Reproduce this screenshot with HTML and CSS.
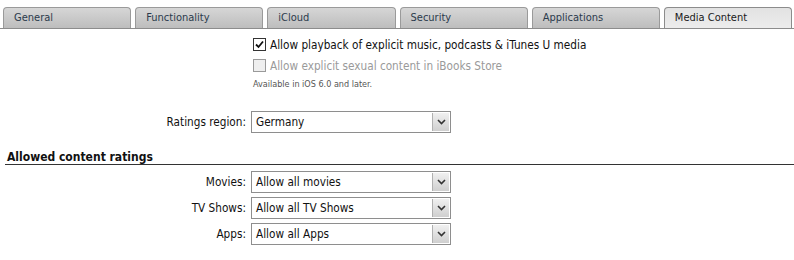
FILE: index.html
```html
<!DOCTYPE html>
<html lang="en">
<head>
    <meta charset="UTF-8">
    <title>Restrictions - Media Content</title>
    <link rel="stylesheet" href="styles.css">
</head>
<body>

    <!-- Tab strip -->
    <div class="tabs">
        <div class="tab">General</div>
        <div class="tab">Functionality</div>
        <div class="tab">iCloud</div>
        <div class="tab">Security</div>
        <div class="tab">Applications</div>
        <div class="tab active">Media Content</div>
    </div>

    <div class="panel">
        <div class="checks">
            <div class="check">
                <span class="box checked">
                    <svg width="11" height="11" viewBox="0 0 11 11"><path d="M2 5.5 L4.5 8 L9 2.5" fill="none" stroke="#111" stroke-width="1.8"/></svg>
                </span>
                <span>Allow playback of explicit music, podcasts &amp; iTunes U media</span>
            </div>
            <div class="check disabled">
                <span class="box"></span>
                <span>Allow explicit sexual content in iBooks Store</span>
            </div>
            <div class="note">Available in iOS 6.0 and later.</div>
        </div>

        <div class="form-row region">
            <label>Ratings region:</label>
            <div class="select">
                <span class="value">Germany</span>
                <span class="arrow"><svg width="9" height="6" viewBox="0 0 9 6"><path d="M1 1 L4.5 4.5 L8 1" fill="none" stroke="#333" stroke-width="1.6"/></svg></span>
            </div>
        </div>

        <h3 class="section-title">Allowed content ratings</h3>

        <div class="ratings">
            <div class="form-row">
                <label>Movies:</label>
                <div class="select">
                    <span class="value">Allow all movies</span>
                    <span class="arrow"><svg width="9" height="6" viewBox="0 0 9 6"><path d="M1 1 L4.5 4.5 L8 1" fill="none" stroke="#333" stroke-width="1.6"/></svg></span>
                </div>
            </div>
            <div class="form-row">
                <label>TV Shows:</label>
                <div class="select">
                    <span class="value">Allow all TV Shows</span>
                    <span class="arrow"><svg width="9" height="6" viewBox="0 0 9 6"><path d="M1 1 L4.5 4.5 L8 1" fill="none" stroke="#333" stroke-width="1.6"/></svg></span>
                </div>
            </div>
            <div class="form-row">
                <label>Apps:</label>
                <div class="select">
                    <span class="value">Allow all Apps</span>
                    <span class="arrow"><svg width="9" height="6" viewBox="0 0 9 6"><path d="M1 1 L4.5 4.5 L8 1" fill="none" stroke="#333" stroke-width="1.6"/></svg></span>
                </div>
            </div>
        </div>
    </div>

</body>
</html>
```

FILE: styles.css
```css
body {
    font-family: 'DejaVu Sans Condensed', 'DejaVu Sans', sans-serif;
    font-size: 11.7px;
    color: #111;
    background: #ffffff;
    margin: 0;
    padding: 0;
}

/* Tabs */
.tabs {
    display: flex;
    gap: 4px;
    padding: 7px 2px 0 3px;
    border-bottom: 1px solid #8c8c8c;
}

.tab {
    flex: 1;
    height: 20px;
    line-height: 20px;
    padding-left: 10px;
    border: 1px solid #9a9a9a;
    border-bottom: none;
    border-radius: 4px 4px 0 0;
    background: linear-gradient(to bottom, #d6d6d6, #bdbdbd);
    color: #2b3a4c;
    font-size: 11px;
}

.tab.active {
    background: linear-gradient(to bottom, #e2e2e2, #ececec);
    border-color: #8c8c8c;
    color: #1a1a1a;
}

/* Checkboxes */
.checks {
    padding: 5px 0 0 253px;
}

.check {
    display: flex;
    align-items: center;
    gap: 4px;
    height: 21px;
}

.box {
    width: 11px;
    height: 11px;
    border: 1px solid #333;
    background: #fff;
    display: flex;
    align-items: center;
    justify-content: center;
}

.check.disabled {
    color: #9a9a9a;
}

.check.disabled .box {
    border-color: #9a9a9a;
    background: #efefef;
}

.note {
    font-size: 9px;
    color: #555;
    margin-top: 3px;
}

/* Form rows */
.form-row {
    display: grid;
    grid-template-columns: 246px 200px;
    column-gap: 5px;
    align-items: center;
    height: 26px;
}

.form-row label {
    text-align: right;
}

.region {
    margin-top: 20px;
}

.select {
    display: flex;
    height: 20px;
    border: 1px solid #8e8e8e;
    background: #fff;
}

.select .value {
    flex: 1;
    line-height: 20px;
    padding-left: 4px;
}

.select .arrow {
    width: 16px;
    margin: 1px;
    display: flex;
    align-items: center;
    justify-content: center;
    background: linear-gradient(to bottom, #f0f0f0, #cfcfcf);
    border-left: 1px solid #b0b0b0;
}

.section-title {
    font-size: 12px;
    font-weight: bold;
    margin: 15px 0 0 5px;
    padding: 0 0 0 2px;
    border-bottom: 1px solid #333;
}

.ratings {
    padding-top: 4px;
}
```
